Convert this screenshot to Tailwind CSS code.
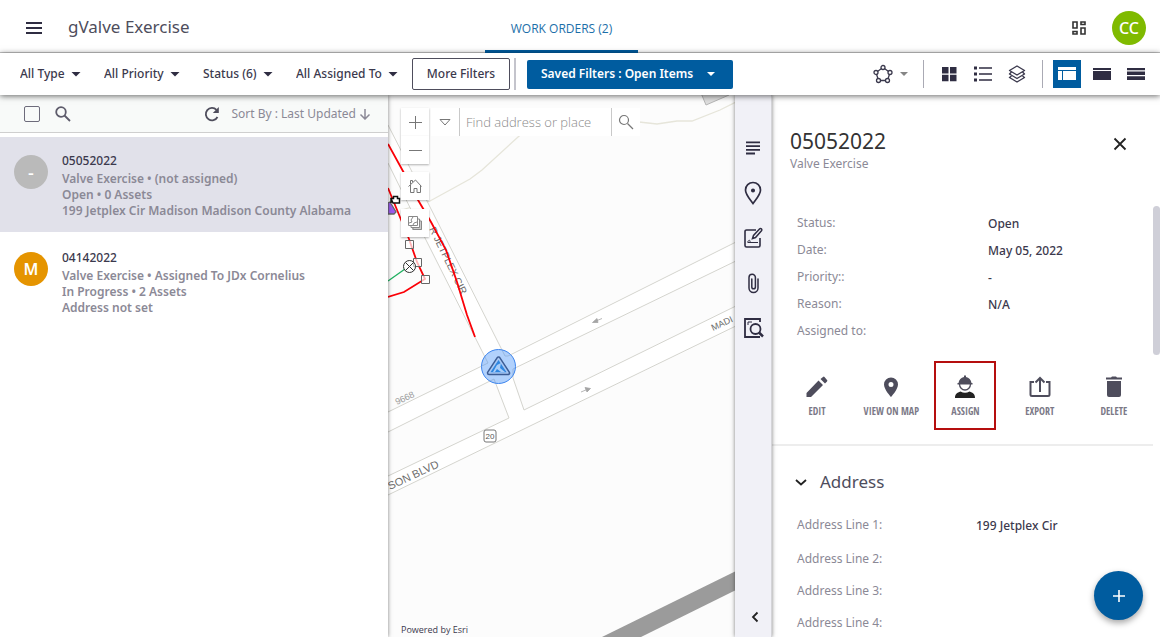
<!DOCTYPE html>
<html lang="en">
<head>
    <meta charset="UTF-8">
    <meta name="viewport" content="width=device-width, initial-scale=1.0">
    <script src="https://cdn.jsdelivr.net/npm/@tailwindcss/browser@4"></script>
    <title>gValve Exercise</title>
</head>
<body class="h-screen flex flex-col overflow-hidden bg-white font-['Noto_Sans',sans-serif] text-xs text-[#3b394d]">
    <!-- Header -->
    <header class="h-[53px] shrink-0 flex items-stretch border-b border-[#c8c8c8]">
        <div class="w-[485px] flex items-center gap-6 pl-6 pt-[3px]">
            <button aria-label="Menu">
                <svg class="w-5 h-5" viewBox="0 0 20 20" fill="#2f2d42"><path d="M2 4h16v2H2zM2 9h16v2H2zM2 14h16v2H2z"/></svg>
            </button>
            <h1 class="text-[17px] text-[#4e4d5c]">gValve Exercise</h1>
        </div>
        <nav class="flex">
            <a href="#" class="w-[153px] -mb-px pt-2 flex items-center justify-center border-b-3 border-[#005c9f] text-[#1c6fa9] font-['Open_Sans','Noto_Sans',sans-serif] font-medium">WORK ORDERS (2)</a>
        </nav>
        <div class="ml-auto flex items-center gap-[25px] pt-[3px] pr-3.5">
            <button aria-label="Dashboard">
                <svg class="w-4 h-4" viewBox="0 0 16 16" fill="none" stroke="#333" stroke-width="1.6"><path d="M2 2h4v6H2zM10 2h4v2.500h-4zM10 8h4v6h-4zM2 11.500h4V14H2z"/></svg>
            </button>
            <button class="w-[34px] h-[34px] rounded-full bg-[#7fba00] text-white text-base font-medium">CC</button>
        </div>
    </header>

    <!-- Filter bar -->
    <div class="relative z-20 h-[42px] shrink-0 flex items-center pl-5 pr-[15px] bg-white shadow-[0_1px_6px_rgba(0,0,0,0.6)] font-medium">
        <div class="flex items-center gap-[23px]">
            <label class="flex items-center gap-1.5">
                <select aria-label="Type" class="appearance-none"><option>All Type</option></select>
                <svg class="w-2.5 h-1.5" viewBox="0 0 10 6" fill="#2f2d42"><path d="M0.500 1h9L5 5.500z"/></svg>
            </label>
            <label class="flex items-center gap-1.5">
                <select aria-label="Priority" class="appearance-none"><option>All Priority</option></select>
                <svg class="w-2.5 h-1.5" viewBox="0 0 10 6" fill="#2f2d42"><path d="M0.500 1h9L5 5.500z"/></svg>
            </label>
            <label class="flex items-center gap-1.5">
                <select aria-label="Status" class="appearance-none"><option>Status (6)</option></select>
                <svg class="w-2.5 h-1.5" viewBox="0 0 10 6" fill="#2f2d42"><path d="M0.500 1h9L5 5.500z"/></svg>
            </label>
            <label class="flex items-center gap-1.5">
                <select aria-label="Assigned to" class="appearance-none"><option>All Assigned To</option></select>
                <svg class="w-2.5 h-1.5" viewBox="0 0 10 6" fill="#2f2d42"><path d="M0.500 1h9L5 5.500z"/></svg>
            </label>
        </div>
        <button class="ml-3.5 w-[98px] h-8 border border-[#4e4d5c] rounded-xs">More Filters</button>
        <div class="ml-1 mr-[11px] w-0.5 h-8 bg-[#c4c4cc]"></div>
        <label class="w-[206px] h-[29px] px-3.5 flex items-center gap-3 rounded-xs bg-[#005c9f] text-white font-semibold">
            <select aria-label="Saved filters" class="appearance-none"><option>Saved Filters : Open Items</option></select>
            <svg class="w-2.5 h-1.5" viewBox="0 0 10 6" fill="#fff"><path d="M1 1h8L5 5z"/></svg>
        </label>
        <div class="ml-auto flex items-center">
            <button aria-label="Shape select" class="flex items-center gap-1.5">
                <svg class="w-5 h-5" viewBox="0 0 20 20" fill="#fff" stroke="#3b394d" stroke-width="1.3">
                    <path d="M10 3.500L17 8.500L14.500 16.500H5.500L3 8.500z"/>
                    <circle cx="10" cy="3.500" r="2"/><circle cx="17" cy="8.500" r="2"/><circle cx="14.500" cy="16.500" r="2"/><circle cx="5.500" cy="16.500" r="2"/><circle cx="3" cy="8.500" r="2"/>
                </svg>
                <svg class="w-2.5 h-1.5" viewBox="0 0 10 6" fill="#858585"><path d="M1 1h8L5 5z"/></svg>
            </button>
            <div class="ml-3.5 mr-3.5 w-px h-7 bg-[#aaaab4]"></div>
            <div class="flex items-center gap-4">
                <button aria-label="Grid view" class="ml-0.5">
                    <svg class="w-[18px] h-[18px]" viewBox="0 0 18 18" fill="#2f2d42"><path d="M2 2h6.500v6.500H2zM10 2h6.500v6.500H10zM2 9.800h6.500v6.500H2zM10 9.800h6.500v6.500H10z"/></svg>
                </button>
                <button aria-label="List view">
                    <svg class="w-[18px] h-[18px]" viewBox="0 0 18 18" fill="#2f2d42"><path d="M0 1.500h3v3H0zM0 7.500h3v3H0zM0 13.500h3v3H0zM5 2.300h13v1.500H5zM5 8.300h13v1.500H5zM5 14.300h13v1.500H5z"/></svg>
                </button>
                <button aria-label="Layers">
                    <svg class="w-[18px] h-[18px]" viewBox="0 0 18 18" fill="#fff" stroke="#3b394d" stroke-width="1.4" stroke-linejoin="round"><path d="M3.500 11L1.500 12.500L9 17l7.500-4.500-2-1.500"/><path d="M3.500 7L1.500 9L9 13.500L16.500 9l-2-2"/><path d="M9 1L16.500 5.500L9 10L1.500 5.500z"/></svg>
                </button>
            </div>
            <div class="ml-4 mr-2.5 w-px h-7 bg-[#aaaab4]"></div>
            <button aria-label="Split view" class="w-7 h-7 flex items-center justify-center bg-[#005c9f]">
                <svg class="w-[18px] h-[14px]" viewBox="0 0 18 14" fill="#fff"><path d="M0 0h18v3H0zM0 4h4v9H0zM5 4h13v9H5z"/></svg>
            </button>
            <button aria-label="Map view" class="ml-3">
                <svg class="w-[18px] h-[14px]" viewBox="0 0 18 14" fill="#2f2d42"><path d="M0 1h18v2H0zM0 4h18v9H0z"/></svg>
            </button>
            <button aria-label="Table view" class="ml-4">
                <svg class="w-[18px] h-[14px]" viewBox="0 0 18 14" fill="#2f2d42"><path d="M0 1h18v2.300H0zM0 4.500h18v3.500H0zM0 9.300h18v3.700H0z"/></svg>
            </button>
        </div>
    </div>

    <main class="flex-1 min-h-0 flex">
        <!-- Work order list -->
        <section class="relative z-10 w-[388px] shrink-0 bg-white shadow-[0_0_4px_rgba(0,0,0,0.5)]">
            <div class="h-[38px] flex items-center pl-6 pr-4 bg-[#f8faf9] border-b border-[#cfcfcf] text-[#8b8996]">
                <input type="checkbox" aria-label="Select all" class="appearance-none w-4 h-4 border border-[#6d6b7b] rounded-xs">
                <button aria-label="Search" class="ml-3.5">
                    <svg class="w-[18px] h-[18px]" viewBox="0 0 18 18" fill="none" stroke="#5d5b6b" stroke-width="1.8"><circle cx="7" cy="7" r="4.800"/><path d="M10.500 10.500L16 16"/></svg>
                </button>
                <button aria-label="Refresh" class="ml-auto">
                    <svg class="w-[18px] h-[18px]" viewBox="0 0 18 18"><path d="M14.500 12A6.200 6.200 0 1 1 13.500 4.800" fill="none" stroke="#4e4d5c" stroke-width="1.800"/><path d="M15.800 2v6H9.800z" fill="#4e4d5c"/></svg>
                </button>
                <button class="ml-2.5 flex items-center gap-0.5">
                    Sort By : Last Updated
                    <svg class="w-3.5 h-3" viewBox="0 0 14 12" fill="none" stroke="#8b8996" stroke-width="1.500"><path d="M7 1v10M2.500 6.500L7 11l4.500-4.500"/></svg>
                </button>
            </div>
            <ul class="pt-1 font-medium text-[#8b8996]">
                <li class="h-[95px] px-3.5 pt-3.5 flex gap-3.5 bg-[#e1e1ea]">
                    <span class="mt-1 w-[34px] h-[34px] shrink-0 rounded-full bg-[#bababa] text-white text-lg flex items-center justify-center">-</span>
                    <div>
                        <h2 class="leading-5 text-[#3b394d]">05052022</h2>
                        <p class="leading-4 font-semibold">Valve Exercise • (not assigned)<br>Open • 0 Assets<br>199 Jetplex Cir Madison Madison County Alabama</p>
                    </div>
                </li>
                <li class="mt-0.5 h-[95px] px-3.5 pt-3.5 flex gap-3.5">
                    <span class="mt-1 w-[34px] h-[34px] shrink-0 rounded-full bg-[#e59400] text-white text-base font-semibold flex items-center justify-center">M</span>
                    <div>
                        <h2 class="leading-5 text-[#3b394d]">04142022</h2>
                        <p class="leading-4 font-semibold">Valve Exercise • Assigned To JDx Cornelius<br>In Progress • 2 Assets<br>Address not set</p>
                    </div>
                </li>
            </ul>
        </section>

        <!-- Map -->
        <section class="relative flex-1 min-w-0 overflow-hidden bg-[#fcfcfc]">
            <svg class="absolute inset-0 w-full h-full" viewBox="388 95 347 542" preserveAspectRatio="xMidYMid slice" font-family="Liberation Sans, sans-serif">
                <g fill="none" stroke="#e6e5da" stroke-width="1.300">
                    <path d="M530 127L518 137L482 170L470 179L430 201L402 210"/>
                    <path d="M639 122L657 124L677 121L692 121L720 110L736 102"/>
                </g>
                <path d="M701 93L706 105L729 95V93z" fill="#dedede" stroke="#b5b5b5"/>
                <!-- roads -->
                <g fill="#fff" stroke="#d4d4ce">
                    <path stroke="none" d="M388 125L505 356L740 240V259L513 369V378L524 410L740 304V325L388 495V476L509 418L494 379L388 432V412L488 363L388 163z"/>
                    <path fill="none" d="M388 125L428 203L505 356L508 356L740 240M388 163L425 238L488 363L388 412M388 432L494 379L509 418L388 476M740 259L513 369V378L524 410L740 304M388 495L740 324"/>
                </g>
                <path d="M602 637L740 569V588L641 637z" fill="#9b9b9b"/>
                <g fill="#a5a5a5" stroke="#a5a5a5" stroke-width="0.800">
                    <path d="M592.500 322.500L597 318.500L598 322.500zM596 321L602 318.500"/>
                    <path d="M590.500 388.500L585 387.500L587 392zM581 392L587 389.500"/>
                </g>
                <g fill="#6c6c6c" font-size="11">
                    <text transform="translate(390 490) rotate(-25)">SON BLVD</text>
                    <text transform="translate(713 331) rotate(-25)" font-size="9">MADI</text>
                    <text transform="translate(429 229) rotate(64)" font-size="10">R JETPLEX CIR</text>
                    <text transform="translate(397 405) rotate(-25)" font-size="9" fill="#999">9668</text>
                </g>
                <rect x="484" y="430" width="12" height="12" rx="2" fill="#fff" stroke="#777"/>
                <text x="490" y="439" font-size="8" fill="#555" text-anchor="middle">20</text>
                <!-- water lines -->
                <g fill="none" stroke-width="1.800">
                    <path stroke="#fb0007" d="M388 144L404 173L418 200L431 222L446 250L457 282L467 315L475 337"/>
                    <path stroke="#fb0007" d="M388 188L402 222L409 239L417 262L425 279L404 292L388 297"/>
                    <path stroke="#1fb060" stroke-width="1.400" d="M388 281L405 269"/>
                </g>
                <g fill="#fff" stroke="#666">
                    <path d="M405.500 240.500h8v8h-8zM413.500 258.500h8v8h-8zM421.500 275.500h8v8h-8z" fill-opacity="0.700"/>
                    <circle cx="409.500" cy="266.500" r="6" fill-opacity="0.600" stroke="#333"/>
                    <path d="M405.500 262.500l8 8M413.500 262.500l-8 8" stroke="#333"/>
                </g>
                <path d="M388 203v11h6l2-2-6-10z" fill="#9b5cf0" stroke="#666" stroke-width="1.300"/>
                <path d="M391 203v-5M391 198.500h2.500v-2h4v2h2v4.500h-6.500z" fill="#fff" stroke="#111" stroke-width="1.500"/>
                <!-- selected work order -->
                <circle cx="498.500" cy="366.500" r="17" fill="#3b8bf8" fill-opacity="0.400" stroke="#3d85ee"/>
                <path d="M498.500 358.500L508 373H489z" fill="none" stroke="#3c5c94" stroke-width="4.500" stroke-linejoin="round"/>
                <path d="M498.500 358.500L508 373H489z" fill="#2f86e0" stroke="#a8c8f4" stroke-width="1.500" stroke-linejoin="round"/>
                <path d="M497 365l4-2-1 5 5 4h-4l-4-3-2 3h-2z" fill="#a9cdf8"/>
            </svg>
            <div class="absolute left-[13px] top-[13px] flex gap-0.5">
                <div class="w-7 flex flex-col">
                    <button aria-label="Zoom in" class="h-7 flex items-center justify-center bg-white shadow-[0_1px_2px_rgba(0,0,0,0.3)]">
                        <svg class="w-3.5 h-3.5" viewBox="0 0 14 14" stroke="#777"><path d="M7.500 1v13M1 7.500h13"/></svg>
                    </button>
                    <button aria-label="Zoom out" class="h-7 flex items-center justify-center bg-white shadow-[0_1px_2px_rgba(0,0,0,0.3)]">
                        <svg class="w-3.5 h-3.5" viewBox="0 0 14 14" stroke="#777"><path d="M1 7.500h13"/></svg>
                    </button>
                    <button aria-label="Home" class="mt-2 h-7 flex items-center justify-center bg-white shadow-[0_1px_2px_rgba(0,0,0,0.3)]">
                        <svg class="w-4 h-4" viewBox="0 0 16 16" fill="none" stroke="#777"><path d="M1.500 8.500L8.500 2l6 6.500M3.500 7v7.500h3.500v-4h3v4h3.500V7M3.500 6V2.500h2V4"/></svg>
                    </button>
                    <button aria-label="Basemaps" class="mt-[9px] h-7 flex items-center justify-center bg-white shadow-[0_1px_2px_rgba(0,0,0,0.3)]">
                        <svg class="w-4 h-4" viewBox="0 0 16 16" fill="none" stroke="#888"><path d="M12 4.500v7.500H5V15h10V6.500h-1.500v-2z" fill="#ccc" stroke="none"/><path d="M1.500 1.500h9v9h-9zM11 4h1.500v8.500H4V11M13 6h1.500v8.500H6V13M2 8l3-1-1-2 2-3M6 10l1-2 3-1"/></svg>
                    </button>
                </div>
                <div class="h-7 flex items-center bg-white">
                    <button aria-label="Search source" class="w-7 h-7 flex items-center justify-center">
                        <svg class="w-3 h-2" viewBox="0 0 12 8" fill="none" stroke="#777"><path d="M1 1.500h10L6 7z"/></svg>
                    </button>
                    <input type="text" aria-label="Find address or place" placeholder="Find address or place" class="w-[153px] h-7 px-1.5 border-x border-[#c9c9c9] text-[13px] font-['Open_Sans','Noto_Sans',sans-serif] font-light placeholder:text-[#8a8a8a] outline-none">
                    <button aria-label="Search map" class="w-7 h-7 flex items-center justify-center">
                        <svg class="w-4 h-4" viewBox="0 0 16 16" fill="none" stroke="#777" stroke-width="1.200"><circle cx="6" cy="6" r="4.500"/><path d="M9.500 9.500L15 15"/></svg>
                    </button>
                </div>
            </div>
            <p class="absolute left-[13px] bottom-0 leading-[15px] text-[9px] font-['Open_Sans','Noto_Sans',sans-serif]">Powered by Esri</p>
        </section>

        <!-- Detail tabs -->
        <nav class="relative z-10 w-[37px] shrink-0 flex flex-col items-center pt-[41px] pb-2.5 bg-[#f1f1f7] border-r border-[#d4d4d8] shadow-[0_0_4px_rgba(0,0,0,0.5)]">
            <div class="flex flex-col gap-[21px]">
                <button aria-label="Summary">
                    <svg class="w-6 h-6" viewBox="0 0 24 24" fill="#2f2d42"><path d="M5 5.500h14v1.800H5zM5 9.200h14V11H5zM5 12.900h14v1.800H5zM5 16.600h9v1.800H5z"/></svg>
                </button>
                <button aria-label="Location">
                    <svg class="w-6 h-6" viewBox="0 0 24 24" fill="none" stroke="#2f2d42" stroke-width="1.700"><path d="M12 22.500C8 17 4.500 13.500 4.500 9a7.500 7.500 0 0 1 15 0c0 4.500-3.500 8-7.500 13.500z"/><circle cx="12" cy="9.500" r="1.200" fill="#2f2d42"/></svg>
                </button>
                <button aria-label="Form">
                    <svg class="w-6 h-6" viewBox="0 0 24 24" fill="none" stroke="#2f2d42" stroke-width="1.600"><path d="M15 4H5.500A1.500 1.500 0 0 0 4 5.500v14A1.500 1.500 0 0 0 5.500 21h12a1.500 1.500 0 0 0 1.500-1.500V12"/><path d="M11.500 12.500l1-3 6-6.500a1.300 1.300 0 0 1 2 1.800L14.500 11.500z" stroke-width="1.500"/><path d="M6.500 16.500c1-3 3-3 2.500 0M7 16.500h10" stroke-width="1"/></svg>
                </button>
                <button aria-label="Attachments">
                    <svg class="w-6 h-6" viewBox="0 0 24 24" fill="none" stroke="#2f2d42" stroke-width="1.500" stroke-linecap="round"><path d="M17 8v9a4.500 4.500 0 0 1-9 0V6.500a3.200 3.200 0 0 1 6.400 0V16a1.800 1.800 0 0 1-3.600 0V8"/></svg>
                </button>
                <button aria-label="Inspect">
                    <svg class="w-6 h-6" viewBox="0 0 24 24" fill="none" stroke="#2f2d42" stroke-width="1.800"><path d="M19 6V3H4v18h15"/><circle cx="14.500" cy="13" r="5"/><path d="M18 16.500l4 4" stroke-width="2.500"/><path d="M7 9V6h4" stroke-width="1"/></svg>
                </button>
            </div>
            <button aria-label="Collapse" class="mt-auto pl-1">
                <svg class="w-5 h-5" viewBox="0 0 20 20" fill="none" stroke="#222" stroke-width="1.800"><path d="M12.500 5.500L8 10l4.500 4.500"/></svg>
            </button>
        </nav>

        <!-- Detail -->
        <section class="w-[388px] shrink-0 flex flex-col bg-white">
            <div class="h-[111px] shrink-0 pt-8 pl-[18px] pr-8 flex items-start justify-between">
                <div>
                    <h2 class="text-[21px] leading-[28px] text-[#333]">05052022</h2>
                    <p class="leading-[17px] text-[#8b8996]">Valve Exercise</p>
                </div>
                <button aria-label="Close" class="mt-[9px]">
                    <svg class="w-4 h-4" viewBox="0 0 16 16" fill="none" stroke="#222" stroke-width="1.800"><path d="M2.500 2.500l11 11M13.500 2.500l-11 11"/></svg>
                </button>
            </div>
            <div class="flex-1 min-h-0 flex">
                <div class="flex-1 min-w-0 overflow-hidden">
                    <dl class="pl-[25px] pt-[3px] text-[#8b8996]">
                        <div class="h-[27px] flex items-center"><dt class="w-[191px]">Status:</dt><dd class="pt-0.5 font-medium text-[#3b394d]">Open</dd></div>
                        <div class="h-[27px] flex items-center"><dt class="w-[191px]">Date:</dt><dd class="pt-0.5 font-medium text-[#3b394d]">May 05, 2022</dd></div>
                        <div class="h-[27px] flex items-center"><dt class="w-[191px]">Priority::</dt><dd class="pt-0.5 font-medium text-[#3b394d]">-</dd></div>
                        <div class="h-[27px] flex items-center"><dt class="w-[191px]">Reason:</dt><dd class="pt-0.5 font-medium text-[#3b394d]">N/A</dd></div>
                        <div class="h-[27px] flex items-center"><dt class="w-[191px]">Assigned to:</dt><dd></dd></div>
                    </dl>
                    <div class="mt-[17px] pl-2 pr-0.5 grid grid-cols-5 justify-items-center font-['Open_Sans_Condensed','Noto_Sans_Condensed','Liberation_Sans_Narrow','Noto_Sans',sans-serif] text-[10px] leading-4 font-bold text-[#7b7987]">
                        <button class="h-[69px] pt-0.5 flex flex-col items-center justify-center gap-1 whitespace-nowrap">
                            <svg class="w-6 h-6" viewBox="0 0 24 24" fill="#4e4d5c"><path d="M1.500 18v4h4.500L18 10l-4.500-4.500zM22 6.500a1 1 0 0 0 0-1.500L19.500 2a1 1 0 0 0-1.500 0L15.500 4l4.500 4.500z"/></svg>
                            EDIT
                        </button>
                        <button class="h-[69px] pt-0.5 flex flex-col items-center justify-center gap-1 whitespace-nowrap">
                            <svg class="w-6 h-6" viewBox="0 0 24 24" fill="#4e4d5c" fill-rule="evenodd"><path d="M12 2.500a7 7 0 0 0-7 7c0 5 7 12.500 7 12.500s7-7.500 7-12.500a7 7 0 0 0-7-7zM12 12a2.500 2.500 0 1 1 0-5 2.500 2.500 0 0 1 0 5z"/></svg>
                            VIEW ON MAP
                        </button>
                        <button class="h-[69px] pt-0.5 w-[62px] border-2 border-[#b50e0e] flex flex-col items-center justify-center gap-1 whitespace-nowrap">
                            <svg class="w-6 h-6" viewBox="0 0 24 24"><path d="M6.500 9a5.500 6 0 0 0 11 0" fill="#fff" stroke="#4e4d5c" stroke-width="1.300"/><path d="M4.500 9.500V8H5.500C6 5 8 2.500 11 2V0.500h2V2c3 .5 5 3 5.500 6h1v1.500z" fill="#4e4d5c"/><path d="M2 23c0-4 2-5.500 5.500-6.500Q12 19 16.500 16.500C20 17.500 22 19 22 23z" fill="#222"/></svg>
                            ASSIGN
                        </button>
                        <button class="h-[69px] pt-0.5 flex flex-col items-center justify-center gap-1 whitespace-nowrap">
                            <svg class="w-6 h-6" viewBox="0 0 24 24" fill="none" stroke="#4e4d5c" stroke-width="2"><path d="M6 7H2.500v12.500A1.500 1.500 0 0 0 4 21h16a1.500 1.500 0 0 0 1.500-1.500V7H18M12 17V3M7.500 7.500L12 3l4.500 4.500"/></svg>
                            EXPORT
                        </button>
                        <button class="h-[69px] pt-0.5 flex flex-col items-center justify-center gap-1 whitespace-nowrap">
                            <svg class="w-6 h-6" viewBox="0 0 24 24" fill="#4e4d5c"><path d="M4 2.500h5L10 1.500h4l1 1h5v2H4zM5 6h14v14a2 2 0 0 1-2 2H7a2 2 0 0 1-2-2z"/></svg>
                            DELETE
                        </button>
                    </div>
                    <div class="mt-3.5 border-t-2 border-[#ededed] pl-[21px] pt-[22px]">
                        <button class="h-7 flex items-center gap-[11px] text-[17px] text-[#4e4d5c]">
                            <svg class="w-4 h-4" viewBox="0 0 16 16" fill="none" stroke="#222" stroke-width="1.800"><path d="M3 6l5 4.500L13 6"/></svg>
                            Address
                        </button>
                    </div>
                    <dl class="pl-[25px] pt-[13px] text-[#8b8996]">
                        <div class="h-8 mb-0.5 flex items-center"><dt class="w-[179px]">Address Line 1:</dt><dd class="pt-0.5 font-medium text-[#3b394d]">199 Jetplex Cir</dd></div>
                        <div class="h-8 flex items-center"><dt class="w-[179px]">Address Line 2:</dt><dd></dd></div>
                        <div class="h-8 flex items-center"><dt class="w-[179px]">Address Line 3:</dt><dd></dd></div>
                        <div class="h-8 flex items-center"><dt class="w-[179px]">Address Line 4:</dt><dd></dd></div>
                    </dl>
                </div>
                <div class="w-[7px]"><div class="h-[149px] rounded-full bg-[#cfcfd8]"></div></div>
            </div>
        </section>
    </main>

    <button aria-label="Add" class="fixed z-30 right-[17px] bottom-[17px] w-[49px] h-[49px] rounded-full bg-[#005c9f] flex items-center justify-center shadow-[0_3px_6px_rgba(0,0,0,0.35)]">
        <svg class="w-3.5 h-3.5" viewBox="0 0 14 14" stroke="#fff" stroke-width="1.600"><path d="M7 1v12M1 7h12"/></svg>
    </button>
</body>
</html>
